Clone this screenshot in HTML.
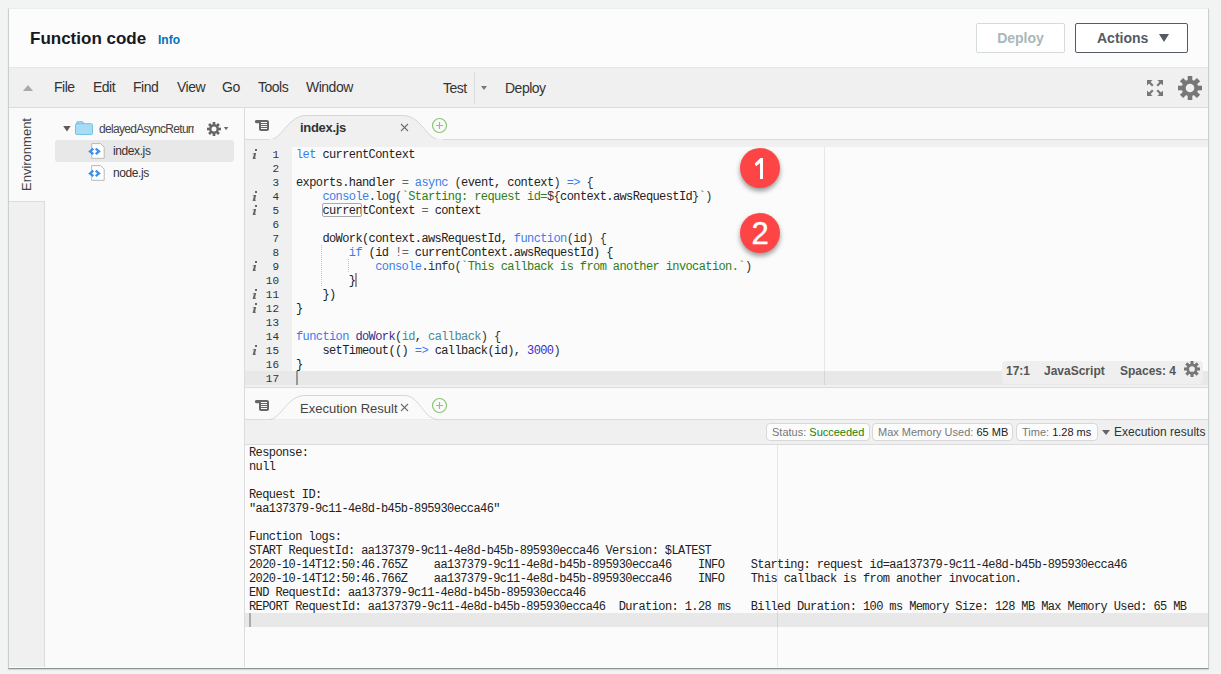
<!DOCTYPE html>
<html><head><meta charset="utf-8">
<style>
*{margin:0;padding:0;box-sizing:border-box}
html,body{width:1221px;height:674px;overflow:hidden;background:#f2f3f3;font-family:"Liberation Sans",sans-serif;color:#333}
.a{position:absolute}
#panel{position:absolute;left:8px;top:8px;width:1201px;height:661px;background:#fcfcfc;border:1px solid #c9cfd0;border-top-color:#eaeded;border-bottom-color:#879596;box-shadow:0 1px 1px 0 rgba(0,28,36,.12)}
.mono{font-family:"Liberation Mono",monospace;font-size:12px;letter-spacing:-0.6px;white-space:pre;tab-size:4;-moz-tab-size:4}
.menu{font-size:14px;letter-spacing:-0.5px;color:#333;top:79px;line-height:16px}
.ln{position:absolute;left:0;width:34px;text-align:right;height:14px;line-height:14px}
.cl{position:absolute;left:0;height:14px;line-height:14px}
.kw{color:#3b7ded}
.fn{color:#33308f}
.pm{color:#4a8a9a}
.st{color:#2f7d18}
.nm{color:#3c2bcb}
.op{color:#666}
.pu{color:#333}
.ic{position:absolute;left:3px}
.pill{top:423px;height:18px;border:1px solid #d8d8d8;border-radius:4px;background:#fcfcfc;font-size:11px;line-height:16px;padding-left:5px;white-space:nowrap}
</style></head><body>
<div id="panel"></div>

<!-- header -->
<div class="a" style="left:30px;top:29px;font-size:17px;font-weight:bold;color:#16191f;line-height:20px">Function code</div>
<div class="a" style="left:158px;top:33px;font-size:12px;font-weight:bold;color:#0073bb;line-height:14px">Info</div>
<div class="a" style="left:976px;top:23px;width:89px;height:30px;border:1px solid #d5dbdb;border-radius:2px;background:#fff;color:#aab7b8;font-size:14px;font-weight:bold;text-align:center;line-height:28px">Deploy</div>
<div class="a" style="left:1075px;top:23px;width:113px;height:30px;border:1px solid #545b64;border-radius:2px;background:#fff;color:#545b64;font-size:14px;font-weight:bold;line-height:28px;padding-left:21px">Actions</div>
<div class="a" style="left:1159px;top:34px;width:0;height:0;border-left:5.5px solid transparent;border-right:5.5px solid transparent;border-top:8px solid #545b64"></div>

<!-- toolbar -->
<div class="a" style="left:9px;top:67px;width:1199px;height:41px;background:#f0f0f0;border-top:1px solid #e6e6e6;border-bottom:1px solid #dcdcdc"></div>
<div class="a" style="left:23px;top:85px;width:0;height:0;border-left:5.5px solid transparent;border-right:5.5px solid transparent;border-bottom:6px solid #aaa"></div>
<div class="a menu" style="left:54px">File</div>
<div class="a menu" style="left:93px">Edit</div>
<div class="a menu" style="left:133px">Find</div>
<div class="a menu" style="left:177px">View</div>
<div class="a menu" style="left:222px">Go</div>
<div class="a menu" style="left:258px">Tools</div>
<div class="a menu" style="left:306px">Window</div>
<div class="a menu" style="left:443px;top:80px">Test</div>
<div class="a" style="left:474px;top:72px;width:1px;height:32px;background:#dcdcdc"></div>
<div class="a" style="left:480.5px;top:86px;width:0;height:0;border-left:3.5px solid transparent;border-right:3.5px solid transparent;border-top:4.5px solid #777"></div>
<div class="a menu" style="left:505px;top:80px">Deploy</div>
<!-- expand icon -->
<svg class="a" style="left:1147px;top:80px" width="16" height="16" viewBox="0 0 16 16" fill="#777" stroke="#777">
<path d="M0 0h5.6L0 5.6z" stroke="none"/><path d="M1.5 1.5L5.8 5.8" stroke-width="2.2"/>
<path d="M16 0h-5.6L16 5.6z" stroke="none"/><path d="M14.5 1.5L10.2 5.8" stroke-width="2.2"/>
<path d="M0 16h5.6L0 10.4z" stroke="none"/><path d="M1.5 14.5L5.8 10.2" stroke-width="2.2"/>
<path d="M16 16h-5.6L16 10.4z" stroke="none"/><path d="M14.5 14.5L10.2 10.2" stroke-width="2.2"/>
</svg>
<!-- gear -->
<svg class="a" style="left:1178px;top:76px" width="24" height="24" viewBox="0 0 24 24">
<g fill="#777" transform="translate(12 12)">
<rect x="-2.3" y="-12" width="4.6" height="24"/>
<rect x="-2.3" y="-12" width="4.6" height="24" transform="rotate(45)"/>
<rect x="-2.3" y="-12" width="4.6" height="24" transform="rotate(90)"/>
<rect x="-2.3" y="-12" width="4.6" height="24" transform="rotate(135)"/>
<circle r="8.3"/>
</g>
<circle cx="12" cy="12" r="4.3" fill="#f0f0f0"/>
</svg>

<!-- left sidebar -->
<div class="a" style="left:9px;top:108px;width:236px;height:559px;background:#fafafa"></div>
<div class="a" style="left:9px;top:201px;width:36px;height:466px;background:#f0f0f0;border-right:1px solid #dcdcdc;border-top:1px solid #dcdcdc"></div>
<div class="a" style="left:19px;top:191px;width:72px;height:16px;font-size:13px;line-height:16px;color:#444;transform-origin:0 0;transform:rotate(-90deg)">Environment</div>

<!-- file tree -->
<svg class="a" style="left:63px;top:125px" width="8" height="8" viewBox="0 0 8 8"><path d="M0.2 1H7.7L3.95 6.6Z" fill="#5c5c5c"/></svg>
<svg class="a" style="left:75px;top:121px" width="18" height="14" viewBox="0 0 18 14">
<rect x="1.5" y="0.7" width="7" height="3.5" rx="1.5" fill="#a8dcf5" stroke="#74c0e6"/><rect x="0.5" y="2.7" width="17" height="10.8" rx="1.5" fill="#a8dcf5" stroke="#74c0e6"/>
</svg>
<div class="a" style="left:99px;top:121px;width:95px;overflow:hidden;white-space:nowrap;font-size:12px;line-height:16px;color:#444;letter-spacing:-0.7px">delayedAsyncReturn</div>
<svg class="a" style="left:207px;top:122px" width="14" height="14" viewBox="0 0 24 24">
<g fill="#666" transform="translate(12 12)">
<rect x="-2.3" y="-12" width="4.6" height="24"/>
<rect x="-2.3" y="-12" width="4.6" height="24" transform="rotate(45)"/>
<rect x="-2.3" y="-12" width="4.6" height="24" transform="rotate(90)"/>
<rect x="-2.3" y="-12" width="4.6" height="24" transform="rotate(135)"/>
<circle r="8.3"/>
</g>
<circle cx="12" cy="12" r="4.3" fill="#fafafa"/>
</svg>
<svg class="a" style="left:223px;top:126px" width="7" height="6" viewBox="0 0 7 6"><path d="M0.9 1H5.3L3.1 4.3Z" fill="#6a6a6a"/></svg>
<div class="a" style="left:55px;top:140px;width:179px;height:22px;background:#e8e8e8;border-radius:3px"></div>
<svg class="a" style="left:88px;top:142px" width="18" height="18" viewBox="0 0 18 18">
<path d="M3.7 1.6H12.6L16.2 5.2V16.3H3.7Z" fill="#fff" stroke="#b8b8b8" stroke-linejoin="round"/>
<path d="M5.3 6.6L2 9.4L5.3 12.2M7.7 6.6L11 9.4L7.7 12.2" fill="none" stroke="#3f8fe6" stroke-width="2.3"/>
</svg>
<div class="a" style="left:113px;top:143px;font-size:12px;line-height:16px;color:#333;letter-spacing:-0.4px">index.js</div>
<svg class="a" style="left:88px;top:164px" width="18" height="18" viewBox="0 0 18 18">
<path d="M3.7 1.6H12.6L16.2 5.2V16.3H3.7Z" fill="#fff" stroke="#b8b8b8" stroke-linejoin="round"/>
<path d="M5.3 6.6L2 9.4L5.3 12.2M7.7 6.6L11 9.4L7.7 12.2" fill="none" stroke="#3f8fe6" stroke-width="2.3"/>
</svg>
<div class="a" style="left:113px;top:165px;font-size:12px;line-height:16px;color:#333;letter-spacing:-0.4px">node.js</div>

<!-- EDITOR -->

<!-- editor tabbar -->
<div class="a" style="left:244px;top:108px;width:1px;height:559px;background:#dcdcdc"></div>
<div class="a" style="left:245px;top:108px;width:963px;height:32px;background:#fafafa;border-bottom:1px solid #dcdcdc"></div>
<svg class="a" style="left:245px;top:108px" width="220" height="32" viewBox="0 0 220 32">
<path d="M25 31.5C37 31.5 43 7.5 61 7.5H158C176 7.5 182 31.5 194 31.5" fill="#f0f0f0" stroke="#d6d6d6"/>
<rect x="24" y="31" width="174" height="1" fill="#f0f0f0"/>
</svg>
<svg class="a" style="left:255px;top:120px" width="14" height="11" viewBox="0 0 14 11">
<path d="M1.5 0h10.5a2 2 0 0 1 2 2v7a2 2 0 0 1-2 2h-6a2 2 0 0 1-2-2V3.2H1.5a1.6 1.6 0 0 1 0-3.2z" fill="#666"/>
<path d="M6 2.5h6M6 4.5h6M6 6.5h6M6 8.5h6" stroke="#fafafa" stroke-width="1"/>
</svg>
<div class="a" style="left:300px;top:120px;font-size:13px;font-weight:bold;line-height:16px;color:#333;letter-spacing:-0.3px">index.js</div>
<svg class="a" style="left:400px;top:123px" width="9" height="9" viewBox="0 0 9 9"><path d="M1 1l7 7M8 1l-7 7" stroke="#6e6e6e" stroke-width="1.1"/></svg>
<svg class="a" style="left:431px;top:117px" width="17" height="17" viewBox="0 0 17 17"><circle cx="8.5" cy="8.5" r="7" fill="none" stroke="#8cc673" stroke-width="1.2"/><path d="M8.5 5.1v7M5 8.5h7" stroke="#8cc673" stroke-width="1.2"/></svg>

<!-- editor body -->
<div class="a" style="left:245px;top:140px;width:963px;height:247px;background:#f0f0f0"></div>
<div class="a" style="left:292px;top:147px;width:916px;height:238px;background:#fbfbfb"></div>
<div class="a" style="left:245px;top:371px;width:963px;height:14px;background:#e8e8e8"></div>
<div class="a" style="left:824px;top:147px;width:1px;height:238px;background:rgba(0,0,0,.08)"></div>
<div class="a mono" style="left:245px;top:148px;width:34px;height:238px;color:#333;font-size:11px;letter-spacing:0">
<div class="ln" style="top:0px">1</div>
<svg class="ic" style="top:-1px" width="14" height="14" viewBox="0 0 14 14"><rect x="7" y="2" width="2" height="2" fill="#666"/><path d="M4 7.3L6.2 6H8.2L7 11.1L8.1 10.4L7.4 12H4.6L5.9 7.1Z" fill="#666"/></svg>
<div class="ln" style="top:14px">2</div>
<div class="ln" style="top:28px">3</div>
<div class="ln" style="top:42px">4</div>
<svg class="ic" style="top:41px" width="14" height="14" viewBox="0 0 14 14"><rect x="7" y="2" width="2" height="2" fill="#666"/><path d="M4 7.3L6.2 6H8.2L7 11.1L8.1 10.4L7.4 12H4.6L5.9 7.1Z" fill="#666"/></svg>
<div class="ln" style="top:56px">5</div>
<svg class="ic" style="top:55px" width="14" height="14" viewBox="0 0 14 14"><rect x="7" y="2" width="2" height="2" fill="#666"/><path d="M4 7.3L6.2 6H8.2L7 11.1L8.1 10.4L7.4 12H4.6L5.9 7.1Z" fill="#666"/></svg>
<div class="ln" style="top:70px">6</div>
<div class="ln" style="top:84px">7</div>
<div class="ln" style="top:98px">8</div>
<div class="ln" style="top:112px">9</div>
<svg class="ic" style="top:111px" width="14" height="14" viewBox="0 0 14 14"><rect x="7" y="2" width="2" height="2" fill="#666"/><path d="M4 7.3L6.2 6H8.2L7 11.1L8.1 10.4L7.4 12H4.6L5.9 7.1Z" fill="#666"/></svg>
<div class="ln" style="top:126px">10</div>
<div class="ln" style="top:140px">11</div>
<svg class="ic" style="top:139px" width="14" height="14" viewBox="0 0 14 14"><rect x="7" y="2" width="2" height="2" fill="#666"/><path d="M4 7.3L6.2 6H8.2L7 11.1L8.1 10.4L7.4 12H4.6L5.9 7.1Z" fill="#666"/></svg>
<div class="ln" style="top:154px">12</div>
<svg class="ic" style="top:153px" width="14" height="14" viewBox="0 0 14 14"><rect x="7" y="2" width="2" height="2" fill="#666"/><path d="M4 7.3L6.2 6H8.2L7 11.1L8.1 10.4L7.4 12H4.6L5.9 7.1Z" fill="#666"/></svg>
<div class="ln" style="top:168px">13</div>
<div class="ln" style="top:182px">14</div>
<div class="ln" style="top:196px">15</div>
<svg class="ic" style="top:195px" width="14" height="14" viewBox="0 0 14 14"><rect x="7" y="2" width="2" height="2" fill="#666"/><path d="M4 7.3L6.2 6H8.2L7 11.1L8.1 10.4L7.4 12H4.6L5.9 7.1Z" fill="#666"/></svg>
<div class="ln" style="top:210px">16</div>
<div class="ln" style="top:224px">17</div>
</div>
<div class="a mono" style="left:296px;top:148px;width:900px;height:238px;color:#222">
<div class="cl" style="top:0px"><span class="kw">let</span> currentContext</div>
<div class="cl" style="top:14px"></div>
<div class="cl" style="top:28px">exports.handler <span class="op">=</span> <span class="kw">async</span> <span class="pu">(</span>event, context<span class="pu">)</span> <span class="kw">=&gt;</span> <span class="pu">{</span></div>
<div class="cl" style="top:42px">    <span class="kw">console</span><span class="pu">.log(</span><span class="st">`Starting: request id=</span><span class="pu">${</span>context.awsRequestId<span class="pu">}</span><span class="st">`</span><span class="pu">)</span></div>
<div class="cl" style="top:56px">    currentContext <span class="op">=</span> context</div>
<div class="cl" style="top:70px"></div>
<div class="cl" style="top:84px">    doWork(context.awsRequestId, <span class="kw">function</span><span class="pu">(id) {</span></div>
<div class="cl" style="top:98px">        <span class="kw">if</span> (id <span class="op">!=</span> currentContext.awsRequestId) {</div>
<div class="cl" style="top:112px">            <span class="kw">console</span><span class="pu">.info(</span><span class="st">`This callback is from another invocation.`</span><span class="pu">)</span></div>
<div class="cl" style="top:126px">        }</div>
<div class="cl" style="top:140px">    })</div>
<div class="cl" style="top:154px">}</div>
<div class="cl" style="top:168px"></div>
<div class="cl" style="top:182px"><span class="kw">function</span> <span class="fn">doWork</span><span class="pu">(</span><span class="pm">id</span>, <span class="pm">callback</span><span class="pu">) {</span></div>
<div class="cl" style="top:196px">    setTimeout(() <span class="kw">=&gt;</span> callback(id), <span class="nm">3000</span><span class="pu">)</span></div>
<div class="cl" style="top:210px">}</div>
<div class="cl" style="top:224px"></div>
</div>
<!-- indent guides -->
<div class="a" style="left:321px;top:245px;width:1px;height:42px;background:repeating-linear-gradient(to bottom,#c4c4c4 0 1px,transparent 1px 2px)"></div>
<div class="a" style="left:348px;top:259px;width:1px;height:14px;background:repeating-linear-gradient(to bottom,#c4c4c4 0 1px,transparent 1px 2px)"></div>
<div class="a" style="left:322px;top:203px;width:40px;height:14px;border:1px solid #aaa;border-radius:2px"></div>
<div class="a" style="left:355px;top:273px;width:2px;height:14px;background:#999"></div>
<div class="a" style="left:296px;top:371px;width:2px;height:14px;background:#999"></div>
<!-- badges -->
<div class="a" style="left:740px;top:148px;width:40px;height:40px;border-radius:50%;background:#fd4545;box-shadow:0 3px 5px rgba(0,0,0,.4)"></div><svg class="a" style="left:740px;top:148px" width="40" height="40" viewBox="740 148 40 40"><path d="M763 158V179H760V163.2L755.9 166.2L754.8 163.6L760.6 158Z" fill="#fff"/></svg>
<div class="a" style="left:740px;top:213px;width:40px;height:40px;border-radius:50%;background:#fd4545;box-shadow:0 3px 5px rgba(0,0,0,.4);color:#fff;font-size:31px;line-height:42px;text-align:center;-webkit-text-stroke:0.4px #fff">2</div>
<!-- status -->
<div class="a" style="left:1002px;top:361px;width:201px;height:23px;background:#efefef;border-radius:4px;font-size:12px;font-weight:bold;color:#555;line-height:15px">
<span class="a" style="left:4px;top:3px">17:1</span><span class="a" style="left:42px;top:3px">JavaScript</span><span class="a" style="left:118px;top:3px">Spaces: 4</span>
</div>
<svg class="a" style="left:1184px;top:361px" width="16" height="16" viewBox="0 0 24 24">
<g fill="#777" transform="translate(12 12)">
<rect x="-2.3" y="-12" width="4.6" height="24"/>
<rect x="-2.3" y="-12" width="4.6" height="24" transform="rotate(45)"/>
<rect x="-2.3" y="-12" width="4.6" height="24" transform="rotate(90)"/>
<rect x="-2.3" y="-12" width="4.6" height="24" transform="rotate(135)"/>
<circle r="8.3"/>
</g>
<circle cx="12" cy="12" r="4.3" fill="#efefef"/>
</svg>

<!-- result tabbar -->
<div class="a" style="left:245px;top:387px;width:963px;height:1px;background:#dcdcdc"></div>
<div class="a" style="left:245px;top:388px;width:963px;height:32px;background:#fafafa;border-bottom:1px solid #dcdcdc"></div>
<svg class="a" style="left:245px;top:387px" width="220" height="33" viewBox="0 0 220 33">
<path d="M24 32.5C36 32.5 42 8.5 60 8.5H160C174 8.5 179 32.5 193 32.5" fill="#fafafa" stroke="#d6d6d6"/>
</svg>
<svg class="a" style="left:255px;top:400px" width="14" height="11" viewBox="0 0 14 11">
<path d="M1.5 0h10.5a2 2 0 0 1 2 2v7a2 2 0 0 1-2 2h-6a2 2 0 0 1-2-2V3.2H1.5a1.6 1.6 0 0 1 0-3.2z" fill="#666"/>
<path d="M6 2.5h6M6 4.5h6M6 6.5h6M6 8.5h6" stroke="#fafafa" stroke-width="1"/>
</svg>
<div class="a" style="left:300px;top:401px;font-size:13px;line-height:16px;color:#444">Execution Result</div>
<svg class="a" style="left:400px;top:403px" width="9" height="9" viewBox="0 0 9 9"><path d="M1 1l7 7M8 1l-7 7" stroke="#6e6e6e" stroke-width="1.1"/></svg>
<svg class="a" style="left:431px;top:397px" width="17" height="17" viewBox="0 0 17 17"><circle cx="8.5" cy="8.5" r="7" fill="none" stroke="#8cc673" stroke-width="1.2"/><path d="M8.5 5.1v7M5 8.5h7" stroke="#8cc673" stroke-width="1.2"/></svg>

<!-- result status bar -->
<div class="a" style="left:245px;top:420px;width:963px;height:25px;background:#f0f0f0;border-bottom:1px solid #dcdcdc"></div>
<div class="a pill" style="left:766px;width:104px"><span style="color:#777">Status: </span><span style="color:#1d8102">Succeeded</span></div>
<div class="a pill" style="left:872px;width:141px"><span style="color:#777">Max Memory Used: </span><span style="color:#222">65 MB</span></div>
<div class="a pill" style="left:1016px;width:82px"><span style="color:#777">Time: </span><span style="color:#222">1.28 ms</span></div>
<div class="a" style="left:1102px;top:430px;width:0;height:0;border-left:4px solid transparent;border-right:4px solid transparent;border-top:5.5px solid #666"></div>
<div class="a" style="left:1114px;top:425px;font-size:12px;line-height:15px;color:#333">Execution results</div>

<!-- output -->
<div class="a" style="left:245px;top:445px;width:963px;height:222px;background:#fbfbfb"></div>
<div class="a" style="left:245px;top:613px;width:963px;height:14px;background:#e8e8e8"></div>
<div class="a" style="left:777px;top:445px;width:1px;height:222px;background:rgba(0,0,0,.08)"></div>
<div class="a" style="left:249px;top:613px;width:2px;height:14px;background:#aaa"></div>
<div class="a mono" style="left:249px;top:446px;width:955px;height:223px;color:#222">
<div class="cl" style="top:0px">Response:</div>
<div class="cl" style="top:14px">null</div>
<div class="cl" style="top:28px"></div>
<div class="cl" style="top:42px">Request ID:</div>
<div class="cl" style="top:56px">&quot;aa137379-9c11-4e8d-b45b-895930ecca46&quot;</div>
<div class="cl" style="top:70px"></div>
<div class="cl" style="top:84px">Function logs:</div>
<div class="cl" style="top:98px">START RequestId: aa137379-9c11-4e8d-b45b-895930ecca46 Version: $LATEST</div>
<div class="cl" style="top:112px">2020-10-14T12:50:46.765Z	aa137379-9c11-4e8d-b45b-895930ecca46	INFO	Starting: request id=aa137379-9c11-4e8d-b45b-895930ecca46</div>
<div class="cl" style="top:126px">2020-10-14T12:50:46.766Z	aa137379-9c11-4e8d-b45b-895930ecca46	INFO	This callback is from another invocation.</div>
<div class="cl" style="top:140px">END RequestId: aa137379-9c11-4e8d-b45b-895930ecca46</div>
<div class="cl" style="top:154px">REPORT RequestId: aa137379-9c11-4e8d-b45b-895930ecca46	Duration: 1.28 ms	Billed Duration: 100 ms	Memory Size: 128 MB	Max Memory Used: 65 MB</div>
<div class="cl" style="top:168px"></div>
</div>

</body></html>
